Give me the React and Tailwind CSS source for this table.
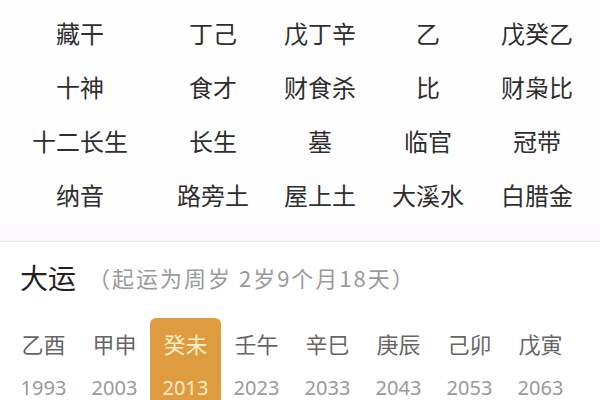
const rows = [
  ["藏干", "丁己", "戊丁辛", "乙", "戊癸乙"],
  ["十神", "食才", "财食杀", "比", "财枭比"],
  ["十二长生", "长生", "墓", "临官", "冠带"],
  ["纳音", "路旁土", "屋上土", "大溪水", "白腊金"],
];

const dayun = [
  { gz: "乙酉", year: "1993" },
  { gz: "甲申", year: "2003" },
  { gz: "癸未", year: "2013", active: true },
  { gz: "壬午", year: "2023" },
  { gz: "辛巳", year: "2033" },
  { gz: "庚辰", year: "2043" },
  { gz: "己卯", year: "2053" },
  { gz: "戊寅", year: "2063" },
];

const font = { fontFamily: '"Noto Sans CJK SC", "Noto Sans", sans-serif' };

export default function App() {
  return (
    <div className="w-[600px] h-[400px] overflow-hidden bg-white" style={font}>
      {/* pillars table */}
      <div className="pt-[6px] bg-[#fefefe]">
        {rows.map((row, i) => (
          <div key={i} className="grid grid-cols-[160px_106px_108px_108px_110px] h-[54px] items-center">
            {row.map((cell, j) => (
              <div key={j} className="text-center text-[24px] leading-none text-[#2e2e2e]">
                {cell}
              </div>
            ))}
          </div>
        ))}
      </div>
      <div className="h-[2px] bg-[#fefefe]"></div>
      <div className="h-[18px] bg-[#fbf8fb] border-b border-[#ece8ec]"></div>

      {/* 大运 */}
      <div className="flex items-center h-[70px] pl-[20px] pb-[1px]">
        <span className="text-[28px] leading-none text-[#222]">大运</span>
        <span className="ml-[12px] text-[22px] tracking-[2px] leading-none text-[#9a9a9a]">（起运为周岁 2岁9个月18天）</span>
      </div>

      <div className="flex pl-[8px] pt-[6px]">
        {dayun.map((d) => (
          <div
            key={d.year}
            className={`w-[71px] flex flex-col items-center rounded-t-[6px] pt-[14px] ${
              d.active ? "bg-[#df9b3f]" : ""
            }`}
          >
            <span className={`text-[22px] leading-none ${d.active ? "text-[#fdefc8]" : "text-[#666]"}`}>
              {d.gz}
            </span>
            <span
              className={`mt-[24px] h-[40px] text-[20px] leading-none ${d.active ? "text-[#fdefc8]" : "text-[#999]"}`}
              style={{ fontFamily: '"Noto Sans", "Noto Sans CJK SC", sans-serif' }}
            >
              {d.year}
            </span>
          </div>
        ))}
      </div>
    </div>
  );
}
